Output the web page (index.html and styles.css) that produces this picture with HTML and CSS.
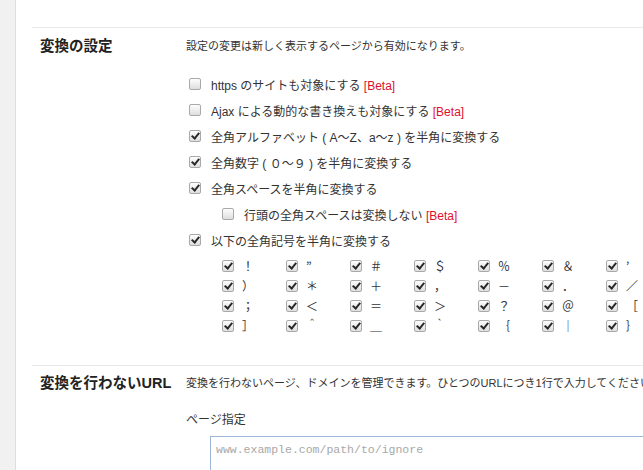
FILE: index.html
```html
<!DOCTYPE html>
<html lang="ja">
<head>
<meta charset="utf-8">
<title>設定</title>
<link rel="stylesheet" href="styles.css">
</head>
<body>
<div class="page">
  <aside class="side"></aside>
  <main class="main">
    <section class="sec sec1">
      <h2 class="sec-title">変換の設定</h2>
      <div class="sec-body">
        <p class="desc">設定の変更は新しく表示するページから有効になります。</p>
        <ul class="opts">
          <li class="opt"><span class="cb"></span><span class="lbl">https のサイトも対象にする <span class="beta">[Beta]</span></span></li>
          <li class="opt"><span class="cb"></span><span class="lbl">Ajax による動的な書き換えも対象にする <span class="beta">[Beta]</span></span></li>
          <li class="opt"><span class="cb on"></span><span class="lbl">全角アルファベット ( A〜Z、a〜z ) を半角に変換する</span></li>
          <li class="opt"><span class="cb on"></span><span class="lbl">全角数字 ( ０〜９ ) を半角に変換する</span></li>
          <li class="opt"><span class="cb on"></span><span class="lbl">全角スペースを半角に変換する</span></li>
          <li class="opt sub"><span class="cb"></span><span class="lbl">行頭の全角スペースは変換しない <span class="beta">[Beta]</span></span></li>
          <li class="opt"><span class="cb on"></span><span class="lbl">以下の全角記号を半角に変換する</span></li>
        </ul>
        <div class="symgrid">
          <div class="sym"><span class="cb on"></span><span class="ch">！</span></div>
          <div class="sym"><span class="cb on"></span><span class="ch">”</span></div>
          <div class="sym"><span class="cb on"></span><span class="ch">＃</span></div>
          <div class="sym"><span class="cb on"></span><span class="ch">＄</span></div>
          <div class="sym"><span class="cb on"></span><span class="ch">％</span></div>
          <div class="sym"><span class="cb on"></span><span class="ch">＆</span></div>
          <div class="sym"><span class="cb on"></span><span class="ch">’</span></div>
          <div class="sym"><span class="cb on"></span><span class="ch">（</span></div>
          <div class="sym"><span class="cb on"></span><span class="ch">）</span></div>
          <div class="sym"><span class="cb on"></span><span class="ch">＊</span></div>
          <div class="sym"><span class="cb on"></span><span class="ch">＋</span></div>
          <div class="sym"><span class="cb on"></span><span class="ch">，</span></div>
          <div class="sym"><span class="cb on"></span><span class="ch">－</span></div>
          <div class="sym"><span class="cb on"></span><span class="ch">．</span></div>
          <div class="sym"><span class="cb on"></span><span class="ch">／</span></div>
          <div class="sym"><span class="cb on"></span><span class="ch">：</span></div>
          <div class="sym"><span class="cb on"></span><span class="ch">；</span></div>
          <div class="sym"><span class="cb on"></span><span class="ch">＜</span></div>
          <div class="sym"><span class="cb on"></span><span class="ch">＝</span></div>
          <div class="sym"><span class="cb on"></span><span class="ch">＞</span></div>
          <div class="sym"><span class="cb on"></span><span class="ch">？</span></div>
          <div class="sym"><span class="cb on"></span><span class="ch">＠</span></div>
          <div class="sym"><span class="cb on"></span><span class="ch">［</span></div>
          <div class="sym"><span class="cb on"></span><span class="ch">＼</span></div>
          <div class="sym"><span class="cb on"></span><span class="ch">］</span></div>
          <div class="sym"><span class="cb on"></span><span class="ch">＾</span></div>
          <div class="sym"><span class="cb on"></span><span class="ch">＿</span></div>
          <div class="sym"><span class="cb on"></span><span class="ch">｀</span></div>
          <div class="sym"><span class="cb on"></span><span class="ch">｛</span></div>
          <div class="sym"><span class="cb on"></span><span class="ch">｜</span></div>
          <div class="sym"><span class="cb on"></span><span class="ch">｝</span></div>
          <div class="sym"><span class="cb on"></span><span class="ch">～</span></div>
        </div>
      </div>
    </section>
    <section class="sec sec2">
      <h2 class="sec-title">変換を行わないURL</h2>
      <div class="sec-body">
        <p class="desc">変換を行わないページ、ドメインを管理できます。ひとつのURLにつき1行で入力してください。</p>
        <p class="field-label">ページ指定</p>
        <textarea class="urls" placeholder="www.example.com/path/to/ignore"></textarea>
      </div>
    </section>
  </main>
</div>
</body>
</html>
```
FILE: styles.css
```css
html, body {
  margin: 0;
  padding: 0;
  background: #fff;
  overflow: hidden;
}
body {
  font-family: "Liberation Sans", "Noto Sans CJK JP", sans-serif;
  color: #333;
}
.page {
  display: flex;
  min-height: 470px;
}
.side {
  width: 15px;
  flex: none;
  background: #f1f1f1;
  border-right: 1px solid #dedede;
}
.main {
  flex: 1;
  padding-top: 27px;
  padding-left: 16px;
  min-width: 0;
  overflow: hidden;
}
.sec {
  display: flex;
  border-top: 1px solid #e8e8e8;
}
.sec1 {
  padding-top: 8px;
  padding-bottom: 29px;
}
.sec2 {
  padding-top: 7px;
}
.sec-title {
  width: 146px;
  flex: none;
  margin: 0;
  padding-left: 8px;
  font-size: 14.5px;
  line-height: 20px;
  font-weight: bold;
  color: #222;
}
.sec-body {
  flex: 1;
  min-width: 0;
}
.desc {
  margin: 0;
  font-size: 11px;
  line-height: 20px;
  white-space: nowrap;
}
.opts {
  list-style: none;
  margin: 15px 0 0;
  padding: 0;
}
.opt {
  display: flex;
  align-items: center;
  gap: 10px;
  height: 26px;
  padding-left: 3px;
  font-size: 12px;
  white-space: nowrap;
}
.opt.sub {
  padding-left: 36px;
}
.beta {
  color: #e0102d;
}
.cb {
  position: relative;
  flex: none;
  box-sizing: border-box;
  width: 12px;
  height: 12px;
  border: 1px solid #a9a9a9;
  border-radius: 2px;
  background: linear-gradient(#fdfdfd, #dedede);
}
.cb.on::after {
  content: "";
  position: absolute;
  left: 3px;
  top: 0px;
  width: 3px;
  height: 6px;
  border: solid #2a2a2a;
  border-width: 0 2px 2px 0;
  transform: rotate(40deg);
}
.symgrid {
  display: grid;
  grid-template-columns: repeat(8, 64px);
  grid-auto-rows: 20px;
  margin: 3px 0 0 36px;
}
.sym {
  display: flex;
  align-items: center;
  gap: 8px;
}
.ch {
  font-family: "Noto Sans CJK JP", sans-serif;
  font-size: 12px;
  line-height: 20px;
  color: #333;
}
.field-label {
  margin: 17px 0 0;
  font-size: 12px;
  line-height: 20px;
}
.urls {
  display: block;
  margin: 6px 0 0 24px;
  width: 600px;
  height: 70px;
  box-sizing: border-box;
  border: 1px solid #9db5d6;
  border-radius: 0;
  padding: 5px 5px;
  font-family: "Liberation Mono", monospace;
  font-size: 11.5px;
  line-height: 16px;
  resize: none;
  outline: none;
}
.urls::placeholder {
  color: #a8a8a8;
}
```
